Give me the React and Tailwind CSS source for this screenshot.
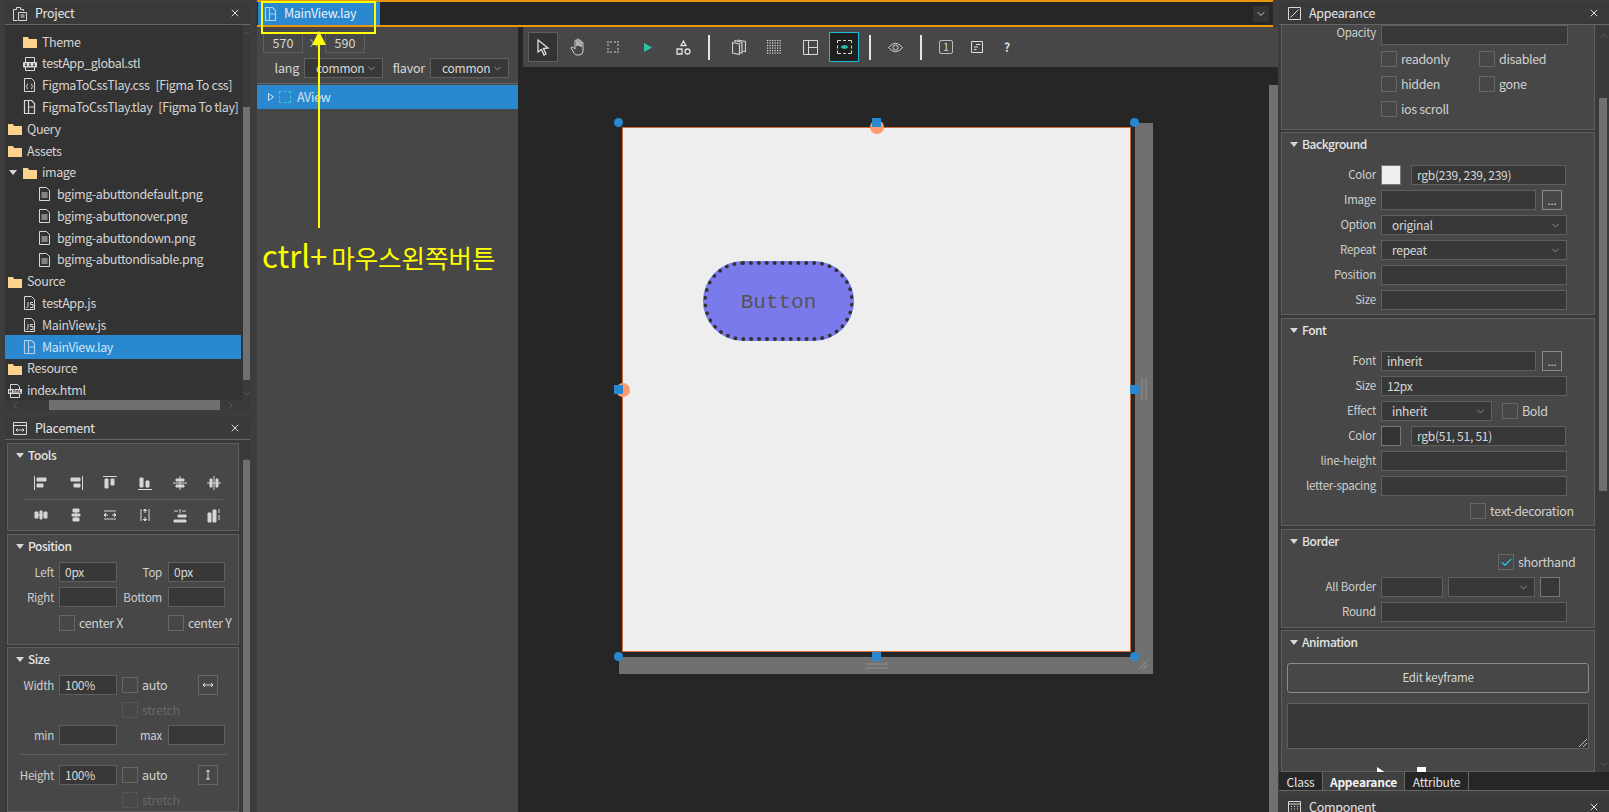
import { ChevronDown, ChevronUp, ChevronLeft, ChevronRight, X, Check } from "lucide-react";

const font = { fontFamily: '"Noto Sans CJK KR", "Noto Sans", sans-serif' };

// small file tree icons
const FolderIcon = () => (
  <svg width="14" height="12" viewBox="0 0 14 12" className="shrink-0">
    <path d="M0 1h5l1 2h8v9H0z" fill="#fdd28c" />
  </svg>
);
const FileIcon = () => (
  <svg width="13" height="14" viewBox="0 0 13 14" fill="none" stroke="#d8d8d8" className="shrink-0">
    <path d="M1.5.5h7l3 3v10h-10z" />
    <path d="M3.5 6h6M3.5 8h6M3.5 10h6" />
  </svg>
);
const LayIcon = ({ color = "#d8d8d8" }) => (
  <svg width="13" height="14" viewBox="0 0 13 14" fill="none" stroke={color} strokeWidth="1.2" className="shrink-0">
    <path d="M1.5.5h7l3 3v10h-10z" />
    <path d="M5.5.5v13M5.5 7h6" />
  </svg>
);
const JsIcon = () => (
  <svg width="13" height="14" viewBox="0 0 13 14" fill="none" stroke="#d8d8d8" className="shrink-0">
    <path d="M1.5.5h7l3 3v10h-10z" />
    <path d="M5 6v4.5q0 1-1.5 1M10 6.5H7.5v2H10v3H7" />
  </svg>
);
const CssFileIcon = () => (
  <svg width="13" height="14" viewBox="0 0 13 14" fill="none" stroke="#d8d8d8" className="shrink-0">
    <path d="M1.5.5h7l3 3v10h-10z" />
    <path d="M5 6q-1 0-1 1v.8l-.7.7.7.7v.8q0 1 1 1M8 6q1 0 1 1v.8l.7.7-.7.7v.8q0 1-1 1" />
  </svg>
);
const StlIcon = () => (
  <svg width="14" height="14" viewBox="0 0 14 14" className="shrink-0">
    <path d="M2.5.5h9v13h-9z" fill="none" stroke="#d8d8d8" />
    <rect x="0" y="5" width="14" height="5.5" rx="1" fill="#d8d8d8" />
    <path d="M2 7h2M6 7h2M10 7h2M2 8.6h2M6 8.6h2M10 8.6h2" stroke="#333" />
  </svg>
);
const HtmlIcon = () => (
  <svg width="14" height="14" viewBox="0 0 14 14" className="shrink-0">
    <path d="M2.5.5h7l2 2v11h-9z" fill="none" stroke="#d8d8d8" />
    <rect x="0" y="5" width="14" height="5" fill="#d8d8d8" />
    <path d="M1.5 6v3M3.5 6v3M1.5 7.5h2M5 6h2M6 6v3M8 9V6l1 1.5L10 6v3M11.5 6v3h2" stroke="#333" strokeWidth=".7" fill="none" />
  </svg>
);
const Caret = ({ className = "" }) => (
  <svg width="8" height="5" viewBox="0 0 8 5" className={`shrink-0 ${className}`}>
    <path d="M0 0h8L4 5z" fill="#d8d8d8" />
  </svg>
);

const treeRows = [
  { d: 1, icon: <FolderIcon />, t: "Theme" },
  { d: 1, icon: <StlIcon />, t: "testApp_global.stl" },
  { d: 1, icon: <CssFileIcon />, t: "FigmaToCssTlay.css", s: "[Figma To css]" },
  { d: 1, icon: <LayIcon />, t: "FigmaToCssTlay.tlay", s: "[Figma To tlay]" },
  { d: 0, icon: <FolderIcon />, t: "Query" },
  { d: 0, icon: <FolderIcon />, t: "Assets" },
  { d: 1, icon: <FolderIcon />, t: "image", open: true },
  { d: 2, icon: <FileIcon />, t: "bgimg-abuttondefault.png" },
  { d: 2, icon: <FileIcon />, t: "bgimg-abuttonover.png" },
  { d: 2, icon: <FileIcon />, t: "bgimg-abuttondown.png" },
  { d: 2, icon: <FileIcon />, t: "bgimg-abuttondisable.png" },
  { d: 0, icon: <FolderIcon />, t: "Source" },
  { d: 1, icon: <JsIcon />, t: "testApp.js" },
  { d: 1, icon: <JsIcon />, t: "MainView.js" },
  { d: 1, icon: <LayIcon color="#a9d0ee" />, t: "MainView.lay", active: true },
  { d: 0, icon: <FolderIcon />, t: "Resource" },
  { d: 0, icon: <HtmlIcon />, t: "index.html" },
];

const TreeRow = ({ row }) => (
  <div
    className={
      "relative flex items-center text-[12.5px] tracking-[-0.4px] whitespace-nowrap " +
      (row.d === 0 ? "pl-[3px] " : row.d === 1 ? "pl-[18px] " : "pl-[33px] ") +
      (row.active ? "h-[23.8px] -my-px bg-[#2a88d0] text-[#cfe4f5]" : "h-[21.8px] text-[#d4d4d4]")
    }
  >
    {row.open && <Caret className="absolute left-[4px] top-[8px]" />}
    <span className="w-[19px] shrink-0 flex">{row.icon}</span>
    <span>{row.t}</span>
    {row.s && <span className="ml-[6px]">{row.s}</span>}
  </div>
);

const PanelHeader = ({ icon, title }) => (
  <div className="h-[23px] shrink-0 flex items-center bg-[#3a3a3a] border-b border-[#666] text-[12.5px] tracking-[-0.3px] text-[#e4e4e4]">
    <span className="flex justify-center shrink-0 w-[30px]">{icon}</span>
    <span className="flex-1">{title}</span>
    <X size={12} className="mr-[9px] text-[#dcdcdc]" />
  </div>
);

const SectionTitle = ({ children }) => (
  <div className="flex items-center gap-[4px] text-[12px] font-medium tracking-[-0.45px] text-[#e4e4e4] h-[22px] pl-[8px]">
    <Caret />
    <span>{children}</span>
  </div>
);

const Box = ({ className = "", children }) => (
  <div className={"border border-[#5f5f5f] bg-[#474747] " + className}>{children}</div>
);

const Input = ({ className = "", children }) => (
  <div className={"h-[20px] shrink-0 border border-[#5f5f5f] bg-[#383838] text-[12px] tracking-[-0.25px] text-[#d8d8d8] flex items-center pl-[5px] " + className}>
    {children}
  </div>
);

const Select = ({ className = "", children }) => (
  <div className={"h-[20px] shrink-0 border border-[#5f5f5f] bg-[#383838] text-[12px] tracking-[-0.25px] text-[#d8d8d8] flex items-center justify-between pl-[10px] pr-[5px] " + className}>
    <span>{children}</span>
    <ChevronDown size={11} className="text-[#9a9a9a]" />
  </div>
);

const CheckBox = ({ label, dim, checked, className = "" }) => (
  <div className={"flex items-center h-[16px] gap-[4px] text-[12.5px] tracking-[-0.35px] " + (dim ? "text-[#666] " : "text-[#d0d0d0] ") + className}>
    <span className={"w-[16px] h-[16px] shrink-0 border flex items-center justify-center " + (dim ? "border-[#555]" : "border-[#666]")}>
      {checked && <Check size={13} strokeWidth={2.5} className="text-[#23bde6]" />}
    </span>
    <span>{label}</span>
  </div>
);

const Label = ({ className = "", children }) => (
  <span className={"text-right text-[11.5px] tracking-[-0.25px] text-[#cfcfcf] shrink-0 " + className}>{children}</span>
);

// rows on the right hand panel, label column ends at x=1376
const Field = ({ label, children }) => (
  <div className="flex items-center gap-[5px] h-[20px]">
    <Label className="w-[94px]">{label}</Label>
    {children}
  </div>
);

const DotButton = ({ className = "" }) => (
  <div className={"w-[20px] h-[20px] border border-[#8a8a8a] text-[#d8d8d8] text-[11px] leading-[18px] text-center " + className}>...</div>
);

// align tools, drawn on an 18 box
const toolIcons = [
  <path d="M2.5 2v14M5 4h9v3H5zM5 10h6v3H5z" />,
  <path d="M15.5 2v14M4 4h9v3H4zM7 10h6v3H7z" />,
  <path d="M2 2.5h14M4 5h3v9H4zM10 5h3v6h-3z" />,
  <path d="M2 15.5h14M4 4h3v9H4zM10 7h3v6h-3z" />,
  <path d="M2 9h14M5 5h8v2H5zM5 11h8v2H5zM9 2v14" />,
  <path d="M9 2v14M5 5h2v8H5zM11 5h2v8h-2zM2 9h14" />,
  <path d="M3 6h3v6H3zM8 5h2v8H8zM12 6h3v6h-3zM6 9h2M10 9h2" />,
  <path d="M6 3h6v3H6zM5 8h8v2H5zM6 12h6v3H6zM9 6v2M9 10v2" />,
  <path d="M3 5h12M3 13h12M3 9h4M11 9h4M5 7l-2 2 2 2M13 7l2 2-2 2" />,
  <path d="M5 3v12M13 3v12M9 3v4M9 11v4M7 5l2-2 2 2M7 13l2 2 2-2" />,
  <path d="M3 14h12v2H3zM7 9h8v2H7zM3 5h4M11 5h4M9 3v4" />,
  <path d="M3 7h3v9H3zM8 4h3v12H8zM14 3v4M14 9v5" />,
];

const ToolIcon = ({ children }) => (
  <svg width="18" height="18" viewBox="0 0 18 18" fill="#d6d6d6" stroke="#d6d6d6" strokeWidth="1">
    {children}
  </svg>
);

const HSep = () => <div className="w-[2px] h-[25px] bg-[#e4e4e4] shrink-0" />;

const ToolSlot = ({ className = "", children }) => (
  <div className={"flex items-center justify-center shrink-0 " + className}>{children}</div>
);

const Handle = ({ className = "", square }) => (
  <div className={"absolute w-[9px] h-[9px] bg-[#2a88d0] " + (square ? "" : "rounded-full ") + className} />
);

const gridDots = Array.from({ length: 36 }, (_, i) => i);

export default function App() {
  return (
    <div style={font} className="relative flex w-[1609px] h-[812px] overflow-hidden bg-[#3d3d3d]">
      {/* left column */}
      <div className="w-[250px] h-full shrink-0 pl-[5px] pt-[2px] flex flex-col">
        <div className="h-[408px] shrink-0 flex flex-col bg-[#333]">
          <PanelHeader
            title="Project"
            icon={
              <svg width="14" height="15" viewBox="0 0 14 15" fill="none" stroke="#d8d8d8">
                <path d="M3.5 3.5h-3v11h4M10.5 5V3.5h-3M3.5 3.5V1.5h4v2" />
                <path d="M5.5 6.5h8v8h-8zM7.5 9h4M7.5 11h4" />
              </svg>
            }
          />
          <div className="flex flex-1 min-h-0">
            <div className="w-[236px] shrink-0 pt-[6px] overflow-hidden">
              {treeRows.map((r) => (
                <TreeRow key={r.t} row={r} />
              ))}
            </div>
            <div className="w-[2px]" />
            <div className="w-[7px] relative bg-[#3a3a3a]">
              <ChevronUp size={11} className="absolute top-[3px] -left-[2px] text-[#5f5f5f]" />
              <div className="absolute top-[82px] h-[273px] w-full bg-[#707070]" />
              <ChevronDown size={11} className="absolute bottom-[1px] -left-[2px] text-[#5f5f5f]" />
            </div>
          </div>
          <div className="h-[10px] shrink-0 relative bg-[#3a3a3a]">
            <ChevronLeft size={11} className="absolute left-[5px] top-0 text-[#5f5f5f]" />
            <div className="absolute left-[44px] w-[171px] h-full bg-[#707070]" />
            <ChevronRight size={11} className="absolute left-[220px] top-0 text-[#5f5f5f]" />
          </div>
        </div>
        <div className="h-[7px] shrink-0" />
        <div className="flex-1 min-h-0 flex flex-col bg-[#3a3a3a]">
          <PanelHeader
            title="Placement"
            icon={
              <svg width="14" height="13" viewBox="0 0 14 13" fill="none" stroke="#d8d8d8">
                <path d="M.5.5h13v12H.5zM.5 3.5h13M3 8h8M4.5 6.5L3 8l1.5 1.5M9.5 6.5L11 8 9.5 9.5" />
              </svg>
            }
          />
          <div className="flex flex-1 min-h-0">
            <div className="w-[238px] pl-[2px] pt-[3px] flex flex-col gap-[3px] overflow-hidden">
              <Box className="w-[232px] h-[88px] shrink-0">
                <SectionTitle>Tools</SectionTitle>
                <div className="flex pl-[16px] h-[33px] items-center">
                  {toolIcons.slice(0, 6).map((ic, i) => (
                    <ToolSlot key={i} className="w-[34.6px]">
                      <ToolIcon>{ic}</ToolIcon>
                    </ToolSlot>
                  ))}
                </div>
                <div className="h-px bg-[#5f5f5f] mx-[15px]" />
                <div className="flex pl-[16px] h-[30px] items-center">
                  {toolIcons.slice(6).map((ic, i) => (
                    <ToolSlot key={i} className="w-[34.6px]">
                      <ToolIcon>{ic}</ToolIcon>
                    </ToolSlot>
                  ))}
                </div>
              </Box>
              <Box className="w-[232px] h-[111px] shrink-0">
                <SectionTitle>Position</SectionTitle>
                <div className="flex flex-col gap-[5px] pt-[5px]">
                  <div className="flex items-center">
                    <Label className="w-[46px] mr-[5px] mt-[2px]">Left</Label>
                    <Input className="w-[58px]">0px</Input>
                    <Label className="w-[45px] mr-[6px] mt-[2px]">Top</Label>
                    <Input className="w-[57px]">0px</Input>
                  </div>
                  <div className="flex items-center">
                    <Label className="w-[46px] mr-[5px] mt-[2px]">Right</Label>
                    <Input className="w-[58px]" />
                    <Label className="w-[45px] mr-[6px] mt-[2px]">Bottom</Label>
                    <Input className="w-[57px]" />
                  </div>
                  <div className="flex items-center pl-[51px] h-[18px] mt-[2px]">
                    <CheckBox label="center X" className="w-[109px]" />
                    <CheckBox label="center Y" />
                  </div>
                </div>
              </Box>
              <Box className="w-[232px] flex-1 -mt-px">
                <SectionTitle>Size</SectionTitle>
                <div className="flex flex-col pt-[5px]">
                  <div className="flex items-center h-[20px]">
                    <Label className="w-[46px] mr-[5px] mt-[2px]">Width</Label>
                    <Input className="w-[58px]">100%</Input>
                    <CheckBox label="auto" className="ml-[5px] w-[76px]" />
                    <div className="w-[20px] h-[20px] border border-[#666] flex items-center justify-center">
                      <svg width="12" height="8" viewBox="0 0 12 8" fill="none" stroke="#ddd">
                        <path d="M1 4h10M3 2L1 4l2 2M9 2l2 2-2 2" />
                      </svg>
                    </div>
                  </div>
                  <CheckBox label="stretch" dim className="pl-[114px] mt-[7px]" />
                  <div className="flex items-center h-[20px] mt-[7px]">
                    <Label className="w-[46px] mr-[5px] mt-[2px]">min</Label>
                    <Input className="w-[58px]" />
                    <Label className="w-[45px] mr-[6px] mt-[2px]">max</Label>
                    <Input className="w-[57px]" />
                  </div>
                  <div className="h-px bg-[#5f5f5f] ml-[12px] w-[207px] mt-[9px]" />
                  <div className="flex items-center h-[20px] mt-[10px]">
                    <Label className="w-[46px] mr-[5px] mt-[2px]">Height</Label>
                    <Input className="w-[58px]">100%</Input>
                    <CheckBox label="auto" className="ml-[5px] w-[76px]" />
                    <div className="w-[20px] h-[20px] border border-[#666] flex items-center justify-center">
                      <svg width="8" height="12" viewBox="0 0 8 12" fill="none" stroke="#ddd">
                        <path d="M4 1v10M2 3l2-2 2 2M2 9l2 2 2-2" />
                      </svg>
                    </div>
                  </div>
                  <CheckBox label="stretch" dim className="pl-[114px] mt-[7px]" />
                </div>
              </Box>
            </div>
            <div className="w-[7px] relative bg-[#3a3a3a]">
              <ChevronUp size={11} className="absolute top-[15px] -left-[2px] text-[#5f5f5f]" />
              <div className="absolute top-[20px] bottom-0 w-full bg-[#707070]" />
            </div>
          </div>
        </div>
      </div>

      {/* center */}
      <div className="w-[1029px] h-full shrink-0 pl-[7px] flex flex-col">
        <div className="w-[1016px] h-[27px] shrink-0 bg-[#262626] border-y-2 border-[#e8960c] flex">
          <div className="w-[122px] ml-px h-full bg-[#2a88d0] flex items-center pl-[6px] gap-[7px] text-[12.5px] tracking-[-0.3px] text-[#e8f2fa]">
            <LayIcon color="#a9d0ee" />
            <span>MainView.lay</span>
          </div>
          <div className="flex-1" />
          <div className="w-[16px] h-[16px] mr-[4px] mt-[4px] bg-[#333] flex items-center justify-center">
            <ChevronDown size={12} className="text-[#ccc]" />
          </div>
        </div>
        <div className="flex flex-1 min-h-0">
          {/* layout tree */}
          <div className="w-[261px] h-full shrink-0 bg-[#474747] flex flex-col text-[#d8d8d8]">
            <div className="flex items-center pl-[6px] pt-[6px] text-[12.5px]">
              <div className="w-[40px] h-[20px] border border-[#5f5f5f] text-center leading-[18px]">570</div>
              <div className="w-[22px] text-center text-[#aaa]">×</div>
              <div className="w-[40px] h-[20px] border border-[#5f5f5f] text-center leading-[18px]">590</div>
            </div>
            <div className="flex items-center pt-[5px] text-[12.5px] tracking-[-0.2px] h-[25px]">
              <span className="w-[42px] text-right mr-[5px]">lang</span>
              <Select className="w-[79px] !pl-[11px]">common</Select>
              <span className="w-[42px] text-right mr-[5px]">flavor</span>
              <Select className="w-[79px] !pl-[11px]">common</Select>
            </div>
            <div className="h-px bg-[#666] mt-[5px]" />
            <div className="h-[24px] mt-px bg-[#2a88d0] flex items-center pl-[11px] gap-[5px] text-[12.5px] tracking-[-0.3px] text-[#d3e6f5]">
              <svg width="6" height="8" viewBox="0 0 6 8" fill="none" stroke="#cfe4f5">
                <path d="M.5.5l5 3.5-5 3.5z" />
              </svg>
              <span className="w-[12px] h-[12px] border border-dashed border-[#3ec6c6]" />
              <span className="ml-[1px]">AView</span>
            </div>
          </div>
          <div className="w-[4px] bg-[#262626]" />
          {/* design area */}
          <div className="flex-1 h-full min-w-0 flex flex-col bg-[#262626]">
            <div className="h-[40px] shrink-0 ml-px bg-[#474747] flex items-center pl-[5px] pr-[16px]">
              <ToolSlot className="w-[30px] h-[30px] border border-[#5f5f5f] bg-[#333]">
                <svg width="16" height="18" viewBox="0 0 16 18" fill="none" stroke="#ddd" strokeWidth="1.3">
                  <path d="M3 2l10 8-4.5.5L11 16l-2 1-2.5-5.5L3 14z" />
                </svg>
              </ToolSlot>
              <ToolSlot className="w-[40px]">
                <svg width="16" height="18" viewBox="0 0 16 18" fill="none" stroke="#d0d0d0">
                  <path d="M5 9V3q0-1 1-1t1 1v5V2q0-1 1-1t1 1v6V3q0-1 1-1t1 1v6V5q0-1 1-1t1 1v8q0 4-4 4H7q-2 0-3-2L1 10q0-1 1-1t3 2z" />
                </svg>
              </ToolSlot>
              <ToolSlot className="w-[30px]">
                <span className="w-[12px] h-[12px] border-2 border-dotted border-[#8c8c8c]" />
              </ToolSlot>
              <ToolSlot className="w-[40px]">
                <svg width="8" height="9" viewBox="0 0 8 9">
                  <path d="M0 0l8 4.5L0 9z" fill="#2ec4a4" />
                </svg>
              </ToolSlot>
              <ToolSlot className="w-[30px]">
                <svg width="15" height="15" viewBox="0 0 15 15" fill="none" stroke="#e0e0e0" strokeWidth="1.3">
                  <path d="M7.5 1l2.5 4.5H5zM1 9h5v5H1z" />
                  <circle cx="11.5" cy="11.5" r="2.5" />
                </svg>
              </ToolSlot>
              <div className="w-[10px]" />
              <HSep />
              <ToolSlot className="w-[58px]">
                <svg width="14" height="16" viewBox="0 0 14 16" fill="none" stroke="#cfcfcf" strokeWidth="1.2">
                  <path d="M.5 3.5l7 1.5v10.5l-7-1.5zM3 3V1.5l7 2V14l-2.5-.5M5.5 1l8 1.500v10L10 12" />
                </svg>
              </ToolSlot>
              <ToolSlot className="w-[12px]">
                <svg width="14" height="14" viewBox="0 0 14 14" fill="#e0e0e0" className="shrink-0">
                  {gridDots.map((i) => (
                    <rect key={i} x={(i % 6) * 2.5} y={Math.floor(i / 6) * 2.5} width="1.2" height="1.2" />
                  ))}
                </svg>
              </ToolSlot>
              <ToolSlot className="w-[60px] -mr-[11px]">
                <svg width="15" height="15" viewBox="0 0 15 15" fill="none" stroke="#d8d8d8">
                  <path d="M.5.5h14v14H.5zM5.5.5v14M5.5 7.5h9" />
                </svg>
              </ToolSlot>
              <ToolSlot className="w-[30px] h-[30px] border border-[#1cb8dc] bg-[#1f1f1f]">
                <svg width="15" height="14" viewBox="0 0 15 14" fill="none">
                  <path d="M.5 3V.5H4M11 .5h3.5V3M14.5 10.5v3H11M4 13.5H.5v-3M.5 5.5v3M14.5 5.5v3M6 .5h3M6 13.5h3" stroke="#d8d8d8" />
                  <path d="M3.5 7q4-4 8 0-4 4-8 0z" fill="#21c0a6" />
                </svg>
              </ToolSlot>
              <div className="w-[10px]" />
              <HSep />
              <ToolSlot className="w-[49px]">
                <svg width="15" height="11" viewBox="0 0 15 11" fill="none" stroke="#d0d0d0">
                  <path d="M.5 5.5Q7.5-3 14.5 5.5 7.5 14 .5 5.5z" />
                  <circle cx="7.5" cy="5.5" r="2.5" />
                </svg>
              </ToolSlot>
              <HSep />
              <ToolSlot className="w-[48px]">
                <span className="w-[14px] h-[14px] border border-[#bbb] rounded-[2px] text-[10px] leading-[12px] text-center text-[#ddd]">1</span>
              </ToolSlot>
              <ToolSlot className="w-[14px]">
                <svg width="12" height="12" viewBox="0 0 12 12" fill="none" stroke="#ddd" className="shrink-0">
                  <path d="M.5.5h11v11H.5zM5 3.5h4.5M3 6h4M3 8.5h2.5" />
                </svg>
              </ToolSlot>
              <ToolSlot className="w-[46px] text-[12px] font-bold text-[#ddd]">?</ToolSlot>
            </div>
            {/* canvas */}
            <div className="flex-1 min-h-0 flex">
              <div className="flex-1 min-w-0 pl-[97px] pt-[56px]">
                <div className="relative w-[534px] h-[551px] bg-[#707070]">
                  <div className="w-[516px] h-[534px] bg-[#262626] pl-[3px] pt-[4px]">
                    <div className="w-[509px] h-[525px] bg-[#eeeeee] border border-[#d0703a] pt-[133px] pl-[80px]">
                      <div className="w-[151px] h-[80px] rounded-[40px] bg-[#7a7aec] border-[4px] border-dotted border-[#333] pt-[3px] flex items-center justify-center text-[21px] text-[#555] [font-family:'Liberation_Mono',monospace]">
                        Button
                      </div>
                    </div>
                  </div>
                  <div className="absolute left-[251px] top-[-3px] w-[14px] h-[14px] rounded-full bg-[#ff9a6b]" />
                  <div className="absolute left-[-3px] top-[260px] w-[14px] h-[14px] rounded-full bg-[#ff9a6b]" />
                  <Handle className="left-[-5px] top-[-5px]" />
                  <Handle className="left-[511px] top-[-5px]" />
                  <Handle className="left-[-5px] top-[529px]" />
                  <Handle className="left-[511px] top-[529px]" />
                  <Handle square className="left-[253px] top-[-5px]" />
                  <Handle square className="left-[253px] top-[529px]" />
                  <Handle square className="left-[-5px] top-[262px]" />
                  <Handle square className="left-[511px] top-[262px]" />
                  <div className="absolute left-[522px] top-[255px] w-[6px] h-[22px] border-x-2 border-[#808080]" />
                  <div className="absolute left-[247px] top-[540px] w-[22px] h-[6px] border-y-2 border-[#808080]" />
                  <svg className="absolute left-[519px] top-[537px]" width="10" height="10" viewBox="0 0 10 10" stroke="#888" strokeWidth="1.5">
                    <path d="M1 9l8-8M5 9l4-4" />
                  </svg>
                </div>
              </div>
              <div className="w-[10px] shrink-0 bg-[#262626] pt-[18px]">
                <div className="w-[9px] h-full ml-px bg-[#707070]" />
              </div>
            </div>
          </div>
          <div className="w-px" />
        </div>
      </div>

      {/* right panel */}
      <div className="w-[330px] h-full shrink-0 pt-[2px] flex flex-col bg-[#3d3d3d]">
        <div className="h-[770px] shrink-0 flex flex-col bg-[#3a3a3a]">
          <PanelHeader
            title="Appearance"
            icon={
              <svg width="13" height="13" viewBox="0 0 13 13" fill="none" stroke="#d8d8d8">
                <path d="M.5.5h12v12H.5zM2.5 10.5l8-8" />
              </svg>
            }
          />
          <div className="flex flex-1 min-h-0">
            <div className="w-[316px] shrink-0 pl-[2px] overflow-hidden flex flex-col gap-[2px]">
              <Box className="w-[314px] h-[105px] shrink-0 border-t-0">
                <Field label={<span className="relative -top-[2px]">Opacity</span>}>
                  <Input className="w-[187px]" />
                </Field>
                <div className="grid grid-cols-[98px_auto] gap-y-[9px] pl-[99px] pt-[6px]">
                  <CheckBox label="readonly" />
                  <CheckBox label="disabled" />
                  <CheckBox label="hidden" />
                  <CheckBox label="gone" />
                  <CheckBox label="ios scroll" />
                </div>
              </Box>
              <Box className="w-[314px] h-[183px] shrink-0">
                <SectionTitle>Background</SectionTitle>
                <div className="flex flex-col gap-[5px] pt-[10px]">
                  <Field label="Color">
                    <div className="w-[20px] h-[20px] bg-[#efefef] border border-[#777]" />
                    <Input className="w-[155px] ml-[5px]">rgb(239, 239, 239)</Input>
                  </Field>
                  <Field label="Image">
                    <Input className="w-[155px]" />
                    <DotButton className="ml-px" />
                  </Field>
                  <Field label="Option">
                    <Select className="w-[186px]">original</Select>
                  </Field>
                  <Field label="Repeat">
                    <Select className="w-[186px]">repeat</Select>
                  </Field>
                  <Field label="Position">
                    <Input className="w-[186px]" />
                  </Field>
                  <Field label="Size">
                    <Input className="w-[186px]" />
                  </Field>
                </div>
              </Box>
              <Box className="w-[314px] h-[208px] shrink-0 mt-[1px]">
                <SectionTitle>Font</SectionTitle>
                <div className="flex flex-col gap-[5px] pt-[10px]">
                  <Field label="Font">
                    <Input className="w-[155px]">inherit</Input>
                    <DotButton className="ml-px" />
                  </Field>
                  <Field label="Size">
                    <Input className="w-[186px]">12px</Input>
                  </Field>
                  <Field label="Effect">
                    <Select className="w-[111px]">inherit</Select>
                    <CheckBox label="Bold" className="ml-[5px]" />
                  </Field>
                  <Field label="Color">
                    <div className="w-[20px] h-[20px] bg-[#333] border border-[#777]" />
                    <Input className="w-[155px] ml-[5px]">rgb(51, 51, 51)</Input>
                  </Field>
                  <Field label="line-height">
                    <Input className="w-[186px]" />
                  </Field>
                  <Field label="letter-spacing">
                    <Input className="w-[186px]" />
                  </Field>
                  <CheckBox label="text-decoration" className="pl-[188px] mt-[2px]" />
                </div>
              </Box>
              <Box className="w-[314px] h-[99px] shrink-0 mt-px">
                <SectionTitle>Border</SectionTitle>
                <CheckBox label="shorthand" checked className="pl-[216px] mt-[2px]" />
                <div className="flex flex-col gap-[5px] pt-[7px]">
                  <Field label="All Border">
                    <Input className="w-[62px]" />
                    <Select className="w-[87px]" />
                    <div className="w-[20px] h-[20px] bg-[#383838] border border-[#777]" />
                  </Field>
                  <Field label="Round">
                    <Input className="w-[186px]" />
                  </Field>
                </div>
              </Box>
              <Box className="relative w-[314px] flex-1 min-h-0">
                <SectionTitle>Animation</SectionTitle>
                <div className="mx-[5px] mt-[10px] h-[30px] w-[302px] border border-[#8a8a8a] rounded-[3px] flex items-center justify-center text-[11.5px] tracking-[-0.2px] text-[#d8d8d8]">
                  Edit keyframe
                </div>
                <div className="relative mx-[5px] mt-[10px] h-[46px] w-[302px] border border-[#5f5f5f] bg-[#383838]">
                  <svg className="absolute right-[1px] bottom-[1px]" width="8" height="8" viewBox="0 0 8 8" stroke="#ccc">
                    <path d="M0 8l8-8M4 8l4-4" />
                  </svg>
                </div>
                <div className="flex ml-[95px] gap-[31px] mt-[18px]">
                  <div className="w-0 h-0 border-y-[6px] border-y-transparent border-l-[9px] border-l-white" />
                  <div className="w-[9px] h-[9px] bg-white" />
                </div>
              </Box>
            </div>
            <div className="w-[4px]" />
            <div className="w-[8px] relative bg-[#3a3a3a]">
              <ChevronUp size={11} className="absolute top-[5px] -left-[1px] text-[#5f5f5f]" />
              <div className="absolute top-[73px] h-[393px] w-full bg-[#707070]" />
              <ChevronDown size={11} className="absolute bottom-[2px] -left-[1px] text-[#5f5f5f]" />
            </div>
          </div>
        </div>
        <div className="h-[19px] shrink-0 flex bg-[#262626] text-[12px] tracking-[-0.25px] border-b border-[#666]">
          <div className="w-[43px] text-center leading-[19px] text-[#e4e4e4]">Class</div>
          <div className="w-[83px] text-center leading-[19px] bg-[#3f3f3f] border-x border-[#666] font-bold text-[#f2f2f2]">Appearance</div>
          <div className="w-[64px] text-center leading-[19px] border-r border-[#666] text-[#e4e4e4]">Attribute</div>
        </div>
        <div className="h-[5px] shrink-0" />
        <div className="flex-1">
          <PanelHeader
            title="Component"
            icon={
              <svg width="13" height="12" viewBox="0 0 13 12" fill="none" stroke="#d8d8d8">
                <path d="M.5.5h12v11H.5zM.5 3h12M3 5.5h1M6 5.5h1M9 5.5h1M3 8h1M6 8h1M9 8h1" />
              </svg>
            }
          />
        </div>
      </div>

      {/* yellow annotation over the editor */}
      <div className="absolute left-[261px] top-[1px] w-[115px] h-[33px] border-2 border-[#ffff00]" />
      <div className="absolute left-[318px] top-[44px] w-[2px] h-[184px] bg-[#ffff00]" />
      <div className="absolute left-[312px] top-[31px] w-0 h-0 border-x-[7.5px] border-x-transparent border-b-[14px] border-b-[#ffff00]" />
      <div className="absolute left-[262px] top-[232px] flex items-baseline text-[#ffff00] whitespace-nowrap">
        <span className="text-[31px] mr-[4px]">ctrl+</span>
        <span className="text-[25.5px]">마우스왼쪽버튼</span>
      </div>
    </div>
  );
}
